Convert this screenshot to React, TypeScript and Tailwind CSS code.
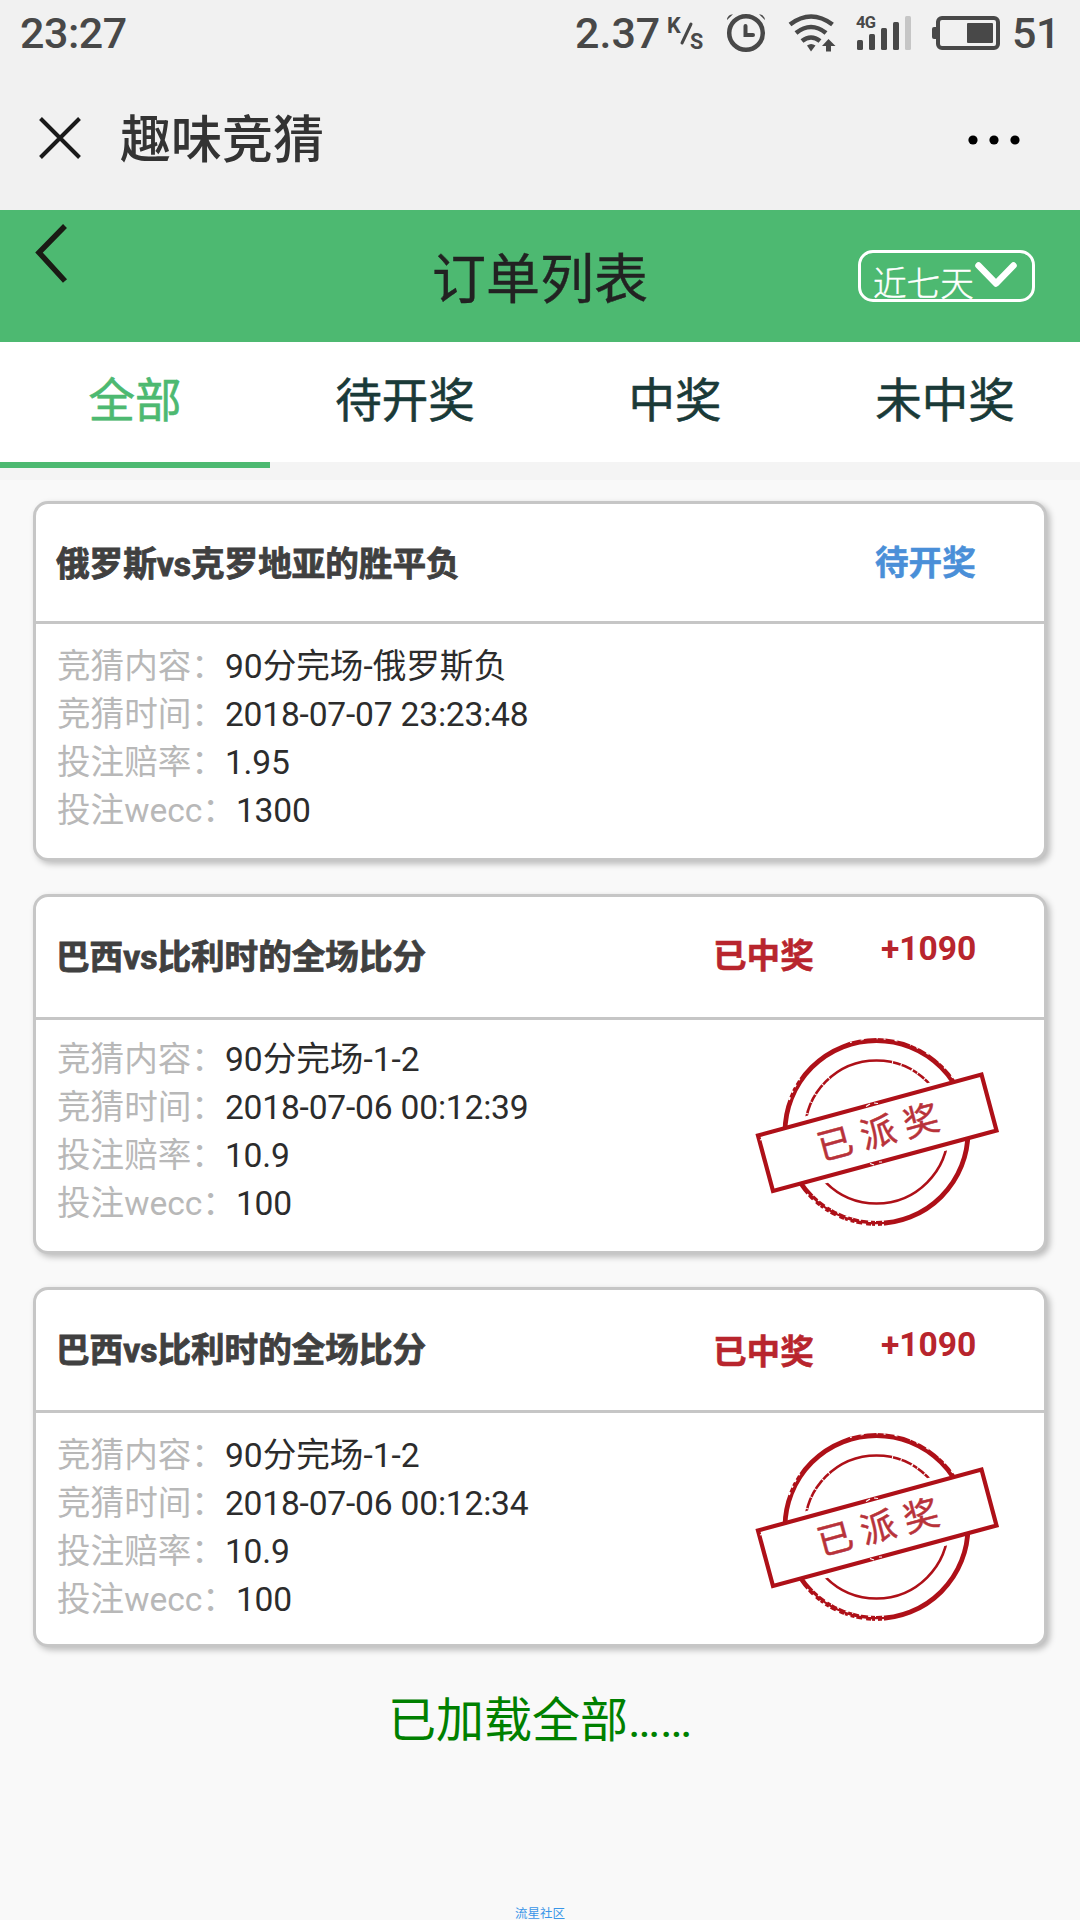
import { useState } from 'react';

interface Order {
  id: number;
  title: string;
  status: 'pending' | 'won';
  reward?: string;
  content: string;
  time: string;
  odds: string;
  amount: string;
}

const TABS = ['全部', '待开奖', '中奖', '未中奖'];

const ORDERS: Order[] = [
  {
    id: 1,
    title: '俄罗斯vs克罗地亚的胜平负',
    status: 'pending',
    content: '90分完场-俄罗斯负',
    time: '2018-07-07 23:23:48',
    odds: '1.95',
    amount: '1300',
  },
  {
    id: 2,
    title: '巴西vs比利时的全场比分',
    status: 'won',
    reward: '+1090',
    content: '90分完场-1-2',
    time: '2018-07-06 00:12:39',
    odds: '10.9',
    amount: '100',
  },
  {
    id: 3,
    title: '巴西vs比利时的全场比分',
    status: 'won',
    reward: '+1090',
    content: '90分完场-1-2',
    time: '2018-07-06 00:12:34',
    odds: '10.9',
    amount: '100',
  },
];

function StatusIcons() {
  return (
    <svg width="352" height="66" viewBox="660 0 352 66" fill="none" className="shrink-0">
      {/* network speed unit */}
      <text x="667" y="33" fontSize="21.5" fontWeight="700" fill="#484848">K</text>
      <path d="M691 24L682 43" stroke="#484848" strokeWidth="3" strokeLinecap="round" />
      <text x="690" y="49" fontSize="21.5" fontWeight="700" fill="#484848">S</text>
      {/* alarm */}
      <circle cx="746" cy="33" r="16.8" stroke="#484848" strokeWidth="4.5" />
      <path d="M745.5 26V35H753" stroke="#484848" strokeWidth="4" strokeLinecap="round" />
      <path d="M727 20C727 17 729.5 14.5 733 14.3L727 20ZM765 20C765 17 762.5 14.5 759 14.3L765 20Z" fill="#484848" />
      {/* wifi */}
      <path d="M790 24.5Q811 8.5 832.5 24.5M796 33Q811 21 826 33M802 41Q811 34 820 41" stroke="#484848" strokeWidth="4.6" />
      <path d="M807 45.5Q811 42.5 815.5 45.5L811 51.5Z" fill="#484848" />
      <path d="M828.5 39L835.5 46H831V51.5H826V46H822Z" fill="#484848" />
      {/* signal */}
      <text x="856" y="28" fontSize="16.5" fontWeight="700" fill="#484848" textLength="19.5">4G</text>
      <rect x="857" y="40" width="6" height="10" rx="1.5" fill="#484848" />
      <rect x="869" y="34" width="6" height="16" rx="1.5" fill="#484848" />
      <rect x="881" y="28" width="6" height="22" rx="1.5" fill="#484848" />
      <rect x="893" y="22" width="6" height="28" rx="1.5" fill="#484848" />
      <rect x="905" y="16" width="6" height="34" rx="1.5" fill="#c6c6c6" />
      {/* battery */}
      <rect x="938" y="18" width="60" height="30" rx="4" stroke="#484848" strokeWidth="4" />
      <path d="M937 27H934Q932 27 932 29V37Q932 39 934 39H937Z" fill="#484848" />
      <rect x="967" y="23" width="26" height="20" rx="1" fill="#484848" />
    </svg>
  );
}

function StatusBar() {
  return (
    <div className="flex h-[66px] items-center text-[43px] font-medium leading-[66px] tracking-[-0.5px] text-[#484848]">
      <span className="w-[575px] pl-5">23:27</span>
      <span className="w-[85px] tracking-normal">2.37</span>
      <StatusIcons />
      <span>51</span>
    </div>
  );
}

function AppBar() {
  return (
    <div className="flex h-[144px] items-center pl-[39px] pr-[60px]">
      <svg width="42" height="42" viewBox="0 0 42 42" stroke="#1a1a1a" strokeWidth="4">
        <path d="M1.5 1.5L40.5 40.5M40.5 1.5L1.5 40.5" />
      </svg>
      <h1 className="ml-[39px] flex-1 pt-[6px] text-[51px] font-medium leading-[60px] text-[#333]">趣味竞猜</h1>
      <svg className="mt-[3px]" width="52" height="10" viewBox="0 0 52 10" fill="#000">
        <circle cx="5" cy="5" r="4.6" />
        <circle cx="26" cy="5" r="4.6" />
        <circle cx="47" cy="5" r="4.6" />
      </svg>
    </div>
  );
}

function PageHeader() {
  return (
    <div className="flex h-[132px] items-start bg-[#4db971]">
      <svg className="ml-[34px] mt-[14px]" width="34" height="60" viewBox="0 0 34 60" fill="none" stroke="#1a1a14" strokeWidth="5.5">
        <path d="M31 2L5 28.5L31 57" />
      </svg>
      <h2 className="w-[790px] pl-[364px] pt-[38px] text-[54px] leading-[66px] text-[#222] [-webkit-text-stroke:0.4px_#222]">订单列表</h2>
      <button
        type="button"
        className="mt-[40px] flex h-[52px] w-[177px] items-start rounded-[15px] border-[3px] border-white pl-[12px] text-white"
      >
        <span className="pt-[12px] text-[33.6px] font-light leading-[40px] [-webkit-text-stroke:0.4px_#fff]">近七天</span>
        <svg className="ml-px mt-[9px]" width="42" height="26" viewBox="0 0 42 26" fill="none" stroke="#fff" strokeWidth="6.5" strokeLinecap="round" strokeLinejoin="round">
          <path d="M3.5 3.5L21 21.5L38.5 3.5" />
        </svg>
      </button>
    </div>
  );
}

function Stamp() {
  return (
    <svg width="250" height="196" viewBox="751 1034 250 196" fill="none" stroke="#ae1018">
      <circle cx="876.5" cy="1132" r="71.5" strokeWidth="2.6" />
      <path d="M757 1135.5L982 1074.5L997.5 1130.5L773 1191.5Z" stroke="#fff" strokeWidth="12" />
      <circle cx="876.5" cy="1132" r="91.5" strokeWidth="4.8" />
      {/* worn ink */}
      <g stroke="#fff">
        <path d="M884 1225.2A93.5 93.5 0 0 1 806 1193.5" strokeWidth="2.4" strokeDasharray="2 4 3 3 1 5 4 6" />
        <path d="M884 1221A89.5 89.5 0 0 1 812 1194" strokeWidth="1.6" strokeDasharray="2 6 1 4 3 7" />
        <path d="M789 1100A93.5 93.5 0 0 1 800 1078" strokeWidth="1.8" strokeDasharray="3 5 2 4" />
        <path d="M850 1042.5A93.5 93.5 0 0 1 958 1086" strokeWidth="1.2" strokeDasharray="2 9 3 13 1 6" />
        <path d="M892 1062.2A71.5 71.5 0 0 1 944 1108" strokeWidth="3" strokeDasharray="1 8 1 11 1.5 5" />
        <path d="M807 1114A71.5 71.5 0 0 1 836 1073" strokeWidth="3" strokeDasharray="1 11 1 8" />
      </g>
      <path d="M758 1135.5L981.5 1074.5L996.5 1130.5L773 1191Z" fill="#fff" strokeWidth="4.2" />
      <path d="M866 1106.5L870 1104M874 1103L878 1103.5M870 1163.5L874 1165M879 1162L882 1162M760 1140L763 1139" stroke="#fff" strokeWidth="1.2" />
      <text
        transform="translate(878 1132) rotate(-15)"
        x="4.5"
        y="13"
        textAnchor="middle"
        fontSize="35.5"
        letterSpacing="9"
        fill="#b8323a"
        stroke="#b8323a"
        strokeWidth="0.5"
      >
        已派奖
      </text>
    </svg>
  );
}

function OrderCard({ order, last }: { order: Order; last: boolean }) {
  const won = order.status === 'won';
  const rows = [
    ['竞猜内容：', order.content],
    ['竞猜时间：', order.time],
    ['投注赔率：', order.odds],
    ['投注wecc：', order.amount],
  ];

  return (
    <div className="h-[360px] rounded-[15px] border-[3px] border-[#c6c6c6] bg-white shadow-[3px_3px_6px_rgba(0,0,0,0.25)]">
      <div className={`flex border-b-[3px] border-[#c6c6c6] pl-[20px] text-[33.6px] font-bold leading-[48px] ${won ? 'h-[123px]' : 'h-[120px]'}`}>
        <span className="w-[657px] pt-[37px] text-[#404040] [-webkit-text-stroke:0.8px_#404040]">{order.title}</span>
        {won ? (
          <>
            <span className={`w-[168px] text-[#b8252d] [-webkit-text-stroke:0.5px_#b8252d] ${last ? 'pt-[39px]' : 'pt-[36px]'}`}>已中奖</span>
            <span className={`text-[#b8252d] ${last ? 'pt-[31px]' : 'pt-[28px]'}`}>{order.reward}</span>
          </>
        ) : (
          <span className="ml-[162px] pt-[36px] text-[#4a8fd8] [-webkit-text-stroke:0.5px_#4a8fd8]">待开奖</span>
        )}
      </div>
      <div className="flex justify-between pl-[21px] pr-[43px]">
        <dl className={`text-[33.6px] leading-[48px] ${won && !last ? 'pt-[16px]' : 'pt-[19px]'}`}>
          {rows.map(([label, value], i) => (
            <div key={label} className="flex">
              <dt className="text-[#b8b8b8]">{label}</dt>
              <dd className={`text-[#2c2c2c] ${i > 0 ? 'tracking-[-0.2px]' : ''}`}>{value}</dd>
            </div>
          ))}
        </dl>
        {won && (
          <div className={last ? 'pt-[16px]' : 'pt-[14px]'}>
            <Stamp />
          </div>
        )}
      </div>
    </div>
  );
}

export default function App() {
  const [active, setActive] = useState(0);

  return (
    <div className="flex h-[1920px] w-[1080px] flex-col overflow-hidden bg-[#f9f9f9] font-[Roboto,'Noto_Sans_CJK_SC',sans-serif]">
      <div className="bg-[#f1f1f1]">
        <StatusBar />
        <AppBar />
      </div>
      <PageHeader />
      <nav className="grid h-[138px] grid-cols-4 bg-[#f4f4f4] pb-3">
        {TABS.map((tab, i) => (
          <button
            key={tab}
            type="button"
            onClick={() => setActive(i)}
            className={`flex flex-col text-[46.5px] ${i === active ? 'text-[#4db971] [-webkit-text-stroke:0.6px_#4db971]' : 'text-[#1a3a38] [-webkit-text-stroke:0.6px_#1a3a38]'}`}
          >
            <span className="h-[120px] w-full bg-white leading-[118px]">{tab}</span>
            <span className={`h-[6px] w-full ${i === active ? 'bg-[#4db971]' : ''}`} />
          </button>
        ))}
      </nav>
      <main className="flex flex-1 flex-col gap-[33px] px-[33px] pt-[21px]">
        {ORDERS.map((order, i) => (
          <OrderCard key={order.id} order={order} last={i === ORDERS.length - 1} />
        ))}
        <p className="mt-[8px] text-center text-[48px] leading-[66px] text-[#008000]">已加载全部……</p>
      </main>
      <footer className="h-[13px] text-center text-[12.5px] leading-[13px] text-[#3a96e8]">流星社区</footer>
    </div>
  );
}
